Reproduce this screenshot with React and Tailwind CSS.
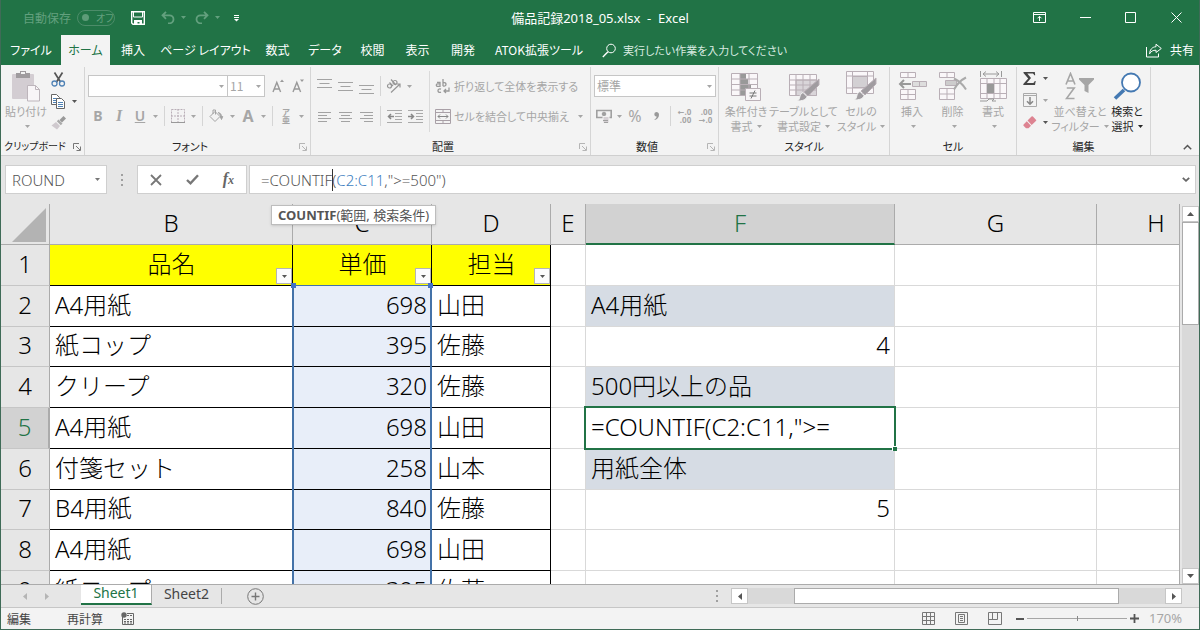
import React, { useState } from "react";
import { clsx } from "clsx";

const UI_FONT =
  "font-['Noto_Sans_CJK_JP','Noto_Sans',sans-serif] [font-feature-settings:'palt']";
const CELL_FONT =
  "font-['Noto_Sans','Noto_Sans_CJK_JP',sans-serif] font-light [font-feature-settings:normal]";

const tabs = [
  { label: "ファイル", width: "w-[60px]" },
  { label: "ホーム", width: "w-[49px]", active: true },
  { label: "挿入", width: "w-[46px]" },
  { label: "ページ レイアウト", width: "w-[99px]" },
  { label: "数式", width: "w-[45px]" },
  { label: "データ", width: "w-[50px]" },
  { label: "校閲", width: "w-[45px]" },
  { label: "表示", width: "w-[45px]" },
  { label: "開発", width: "w-[46px]" },
  { label: "ATOK拡張ツール", width: "w-[106px]" },
];

const columns = [
  { id: "B", width: "w-[243px]" },
  { id: "C", width: "w-[139px]" },
  { id: "D", width: "w-[119px]" },
  { id: "E", width: "w-[35px]" },
  { id: "F", width: "w-[309px]" },
  { id: "G", width: "w-[202px]" },
  { id: "H", width: "w-[119px]" },
];

const rows = [
  { B: "品名", C: "単価", D: "担当", header: true },
  { B: "A4用紙", C: "698", D: "山田", F: "A4用紙", shaded: true },
  { B: "紙コップ", C: "395", D: "佐藤", F: "4", short: true },
  { B: "クリープ", C: "320", D: "佐藤", F: "500円以上の品", shaded: true },
  { B: "A4用紙", C: "698", D: "山田", F: '=COUNTIF(C2:C11,">=', active: true },
  { B: "付箋セット", C: "258", D: "山本", F: "用紙全体", shaded: true },
  { B: "B4用紙", C: "840", D: "佐藤", F: "5", short: true },
  { B: "A4用紙", C: "698", D: "山田" },
  { B: "紙コップ", C: "395", D: "佐藤" },
];

const App = () => {
  return (
    <div
      className={`flex h-screen flex-col overflow-hidden border-x border-b border-[#3f6b57] bg-[#e6e6e6] text-xs text-[#262626] ${UI_FONT}`}
    >
      <TitleBar />
      <TabBar />
      <Ribbon />
      <FormulaBar />
      <Sheet />
      <SheetTabs />
      <StatusBar />
    </div>
  );
};

const TitleBar = () => (
  <header className="grid h-[35px] shrink-0 grid-cols-[1fr_auto_1fr] items-center bg-[#217346] text-white">
    <div className="flex items-center pl-[22px] text-[#63a07e]">
      <span id="autosave">自動保存</span>
      <button
        role="switch"
        aria-checked="false"
        aria-labelledby="autosave"
        className="ml-[6px] flex h-4 w-[38px] items-center gap-[7px] rounded-full border border-[#4c8c69] pl-1 text-[10px] leading-none"
      >
        <span className="size-[7px] rounded-full bg-[#5d9b78]" />
        オフ
      </button>
      <button aria-label="上書き保存" className="ml-4">
        <svg width="14" height="14" viewBox="0 0 14 14" fill="none">
          <path d="M.7.7h12.6v12.6H2L.7 12z" stroke="#fff" strokeWidth="1.4" />
          <path d="M2.5 1v5h9V1" stroke="#fff" strokeWidth="1" />
          <path d="M3 13V9h8v4H8.500v-2h-2v2z" fill="#fff" />
        </svg>
      </button>
      <button aria-label="元に戻す" className="ml-4 flex items-center gap-[6px]">
        <UndoIcon />
        <Arrow />
      </button>
      <button aria-label="やり直し" className="ml-[9px] flex items-center gap-[6px]">
        <UndoIcon className="-scale-x-100" />
        <Arrow />
      </button>
      <button aria-label="クイック アクセスのカスタマイズ" className="ml-[14px] text-white">
        <svg width="5" height="8" viewBox="0 0 5 8">
          <path d="M0 1.500h5M0 3.500h5" stroke="currentColor" />
          <path d="M0 5h5L2.500 7.500z" fill="currentColor" />
        </svg>
      </button>
    </div>
    <h1 className="font-['Noto_Sans','Noto_Sans_CJK_JP',sans-serif] text-[13px] leading-4 whitespace-pre">
      備品記録2018_05.xlsx  -  Excel
    </h1>
    <div className="flex items-center justify-end pr-[17px]">
      <button aria-label="リボンの表示オプション">
        <svg width="13" height="11" viewBox="0 0 13 11" fill="none" stroke="#fff">
          <path d="M.5.500h12v10H.5zM.5 2.500h12M6.500 9V4.500M4.500 6.300l2-2 2 2" />
        </svg>
      </button>
      <button aria-label="最小化" className="ml-[34px]">
        <svg width="11" height="11" viewBox="0 0 11 11" stroke="#fff">
          <path d="M0 5.500h11" />
        </svg>
      </button>
      <button aria-label="最大化" className="ml-[34px]">
        <svg width="11" height="11" viewBox="0 0 11 11" fill="none" stroke="#fff">
          <path d="M.5.500h10v10H.5z" />
        </svg>
      </button>
      <button aria-label="閉じる" className="ml-[35px]">
        <svg width="11" height="11" viewBox="0 0 11 11" stroke="#fff">
          <path d="M.5.500l10 10M10.500.5l-10 10" />
        </svg>
      </button>
    </div>
  </header>
);

const TabBar = () => (
  <nav className="flex h-[30px] shrink-0 items-stretch bg-[#217346] text-white">
    {tabs.map((tab) => (
      <button
        key={tab.label}
        className={clsx(
          "whitespace-nowrap text-center",
          tab.width,
          tab.active && "bg-[#f3f3f3] text-[#217346]"
        )}
      >
        {tab.label}
      </button>
    ))}
    <label className="ml-[10px] flex flex-1 items-center gap-[7px]">
      <svg width="14" height="15" viewBox="0 0 14 15" fill="none" stroke="#fff">
        <circle cx="9" cy="5.500" r="4.300" />
        <path d="M6 8.700.8 14" strokeWidth="1.400" />
      </svg>
      <input
        type="text"
        aria-label="操作アシスト"
        placeholder="実行したい作業を入力してください"
        className="w-60 bg-transparent text-[11px] outline-none placeholder:text-[#d9ebe1]"
      />
    </label>
    <button className="flex items-center gap-2 pr-[5px]">
      <svg width="16" height="15" viewBox="0 0 16 15" fill="none" stroke="#fff">
        <path d="M.5 4v10h12v-3.500" />
        <path d="M10 1.200 15.300 5.500 10 9.500V7.200C7 7.200 5 8.200 3.600 10.800 3.800 6.800 6 4 10 3.700z" />
      </svg>
      共有
    </button>
  </nav>
);

const Ribbon = () => (
  <section className="flex h-[91px] shrink-0 border-b border-[#cfcfcf] bg-[#f3f3f3] text-[#a6a6a6]">
    <Group label="クリップボード" width="w-[84px]" labelSize="text-[10px]" launcher="dark">
      <BigButton width="w-[50px]" label={["貼り付け"]} icon={<PasteIcon />} arrowBelow />
      <div className="flex flex-col pt-px">
        <button aria-label="切り取り" className="h-[22px]">
          <CutIcon />
        </button>
        <button aria-label="コピー" className="flex h-[22px] items-center gap-[6px]">
          <CopyIcon />
          <Arrow className="text-[#555]" />
        </button>
        <button aria-label="書式のコピー/貼り付け" className="h-[22px]">
          <PainterIcon />
        </button>
      </div>
    </Group>

    <Group label="フォント" width="w-[226px]" launcher="light">
      <div className="flex flex-col gap-2 pt-2 pl-[3px]">
        <div className="flex h-[22px] items-center">
          <DropBox label="フォント名" width="w-[140px]" value="" />
          <DropBox label="フォント サイズ" width="-ml-px w-[38px]" value="11" />
          <Tool label="フォント サイズの拡大" width="ml-[3px] w-[20px]">
            <FontSizeIcon up />
          </Tool>
          <Tool label="フォント サイズの縮小" width="w-[20px]">
            <FontSizeIcon />
          </Tool>
        </div>
        <div className="flex h-[22px] items-center">
          <Tool label="太字" width="w-[20px] font-['Noto_Sans'] text-sm font-bold">
            B
          </Tool>
          <Tool label="斜体" width="w-[22px] font-['Liberation_Serif'] text-base font-bold italic">
            I
          </Tool>
          <Tool label="下線" width="w-[20px] font-['Noto_Sans'] text-sm font-semibold underline">
            U
          </Tool>
          <ArrowButton label="下線の種類" />
          <Sep />
          <Tool label="罫線" width="w-[20px]">
            <svg width="14" height="14" viewBox="0 0 14 14" fill="none" stroke="#b9aeb7">
              <path d="M.5.500h13v13H.5zM7 0v14M0 7h14" strokeDasharray="2 1" />
              <path d="M0 13.500h14" stroke="#999" />
            </svg>
          </Tool>
          <ArrowButton label="罫線の種類" />
          <Sep />
          <Tool label="塗りつぶしの色" width="w-[21px]">
            <svg width="15" height="14" viewBox="0 0 15 14" fill="none" stroke="#a3a3a3">
              <path d="M6 2.500 11 7.500 6 12.500 1 7.500zM4 5V1h2.500v4.500" />
              <path d="M9 3.500c3 .5 3.500 2.500 3.500 5M11.200 7.500h2.500l-1.200 3z" fill="#a3a3a3" />
            </svg>
          </Tool>
          <ArrowButton label="塗りつぶしの色の選択" />
          <Tool label="フォントの色" width="w-[20px] font-['Noto_Sans'] text-base font-bold">
            A
          </Tool>
          <ArrowButton label="フォントの色の選択" />
          <Sep />
          <Tool label="ふりがなの表示" width="w-[20px]">
            <span className="flex flex-col items-center text-[8px] leading-[8px] font-bold">
              <span>ア</span>
              <span>亜</span>
            </span>
          </Tool>
          <ArrowButton label="ふりがなの設定" />
        </div>
      </div>
    </Group>

    <Group label="配置" width="w-[280px]" launcher="light">
      <div className="flex w-[118px] flex-col gap-2 pt-2 pl-[3px]">
        <div className="flex h-[22px] items-center">
          <Tool label="上揃え" width="w-[21px]">
            <LinesIcon d="M0 .5h15M2.500 4.500h10M0 8.500h15" />
          </Tool>
          <Tool label="上下中央揃え" width="w-[21px]">
            <LinesIcon d="M0 3.500h15M2.500 7.500h10M0 11.500h15" />
          </Tool>
          <Tool label="下揃え" width="w-[21px]">
            <LinesIcon d="M0 6.500h15M2.500 10.500h10M0 14.500h15" />
          </Tool>
          <Sep />
          <Tool label="方向" width="w-[20px]">
            <svg width="16" height="16" viewBox="0 0 16 16" fill="none" stroke="#969696" strokeWidth="1.200">
              <circle cx="3.500" cy="8" r="2" />
              <path d="M3.500 4.500 7 8M5 1.500 10 7" />
              <circle cx="9" cy="4.500" r="2" />
              <path d="M5 14.500 14 6M10.500 6H14v3.500" />
            </svg>
          </Tool>
          <ArrowButton label="方向の選択" />
        </div>
        <div className="flex h-[22px] items-center">
          <Tool label="左揃え" width="w-[21px]">
            <LinesIcon d="M1 3.500h13M1 6.500h9M1 9.500h13M1 12.500h9" />
          </Tool>
          <Tool label="中央揃え" width="w-[21px]">
            <LinesIcon d="M1 3.500h13M3 6.500h9M1 9.500h13M3 12.500h9" />
          </Tool>
          <Tool label="右揃え" width="w-[21px]">
            <LinesIcon d="M1 3.500h13M5 6.500h9M1 9.500h13M5 12.500h9" />
          </Tool>
          <Sep />
          <Tool label="インデントを減らす" width="w-[21px]">
            <IndentIcon arrow="M7 7.500H1.500M4 5 1.500 7.500 4 10" />
          </Tool>
          <Tool label="インデントを増やす" width="w-[21px]">
            <IndentIcon arrow="M0 7.500h5.500M3 5l2.500 2.500L3 10" />
          </Tool>
        </div>
      </div>
      <div className="my-1 flex flex-1 flex-col gap-2 border-l border-[#dadada] pt-1 pl-[5px] text-[11px]">
        <button className="flex h-[22px] items-center gap-[3px] whitespace-nowrap">
          <svg width="16" height="15" viewBox="0 0 16 15" fill="none" stroke="#999" strokeWidth="1.300">
            <path d="M2 3.300h3v4H2.500a1.200 1.200 0 0 1 0-2.400H5M8 0v7M8 3.800c4-1.500 4 4.500 0 3" />
            <path d="M6 10.200c-4-1.500-4 4.500 0 3M14 8.500v3.500H9M11 10l-2 2 2 2" />
          </svg>
          折り返して全体を表示する
        </button>
        <div className="flex h-[22px] items-center">
          <button className="flex flex-1 items-center gap-[3px] whitespace-nowrap">
            <svg width="16" height="15" viewBox="0 0 16 15" fill="none" stroke="#a9a0a7">
              <path d="M.5.500h15v14H.5zM.5 3.500h15M.5 11.500h15M8 .5v3M8 11.500v3" />
              <path d="M3 7.500h10M5 5.500l-2 2 2 2M11 5.500l2 2-2 2" stroke="#888" />
            </svg>
            セルを結合して中央揃え
          </button>
          <ArrowButton label="結合の種類" />
          <span className="w-1" />
        </div>
      </div>
    </Group>

    <Group label="数値" width="w-[128px]" launcher="light">
      <div className="flex flex-col gap-2 pt-2 pl-[3px]">
        <div className="flex h-[22px] items-center">
          <DropBox label="表示形式" width="w-[122px]" value="標準" />
        </div>
        <div className="flex h-[22px] items-center">
          <Tool label="通貨表示形式" width="w-[20px]">
            <svg width="16" height="15" viewBox="0 0 16 15" fill="none" stroke="#a0a0a0">
              <path d="M.8 1.500h14.400v7H.8z" strokeWidth="1.600" />
              <circle cx="8" cy="5" r="1.800" fill="#a0a0a0" />
              <path d="M7 7.500h6v6.500H7z" fill="#d5d0d4" stroke="#f3f3f3" />
              <path d="M7 11.500h5M8 13.500h4" />
            </svg>
          </Tool>
          <ArrowButton label="通貨の選択" />
          <Tool label="パーセント スタイル" width="w-[20px] font-['Noto_Sans'] text-base">
            %
          </Tool>
          <Tool label="桁区切りスタイル" width="w-[22px]">
            <svg width="5" height="8" viewBox="0 0 5 8" fill="#999">
              <path d="M2.300 0a2.200 2.200 0 1 0 .4 4.400C2.500 6 1.500 6.800.5 7.200L.8 8C3.500 7.200 5 5 5 2.700 5 1 3.900 0 2.300 0z" />
            </svg>
          </Tool>
          <Sep />
          <Tool label="小数点以下の表示桁数を増やす" width="w-[21px]">
            <DecimalIcon top="←.0" bottom=".00" />
          </Tool>
          <Tool label="小数点以下の表示桁数を減らす" width="w-[21px]">
            <DecimalIcon top=".00" bottom="→.0" />
          </Tool>
        </div>
      </div>
    </Group>

    <Group label="スタイル" width="w-[171px]">
      <div className="flex pl-[3px]">
        <BigButton width="w-[48px]" label={["条件付き", "書式"]} icon={<ConditionalIcon />} />
        <BigButton width="w-[67px]" label={["テーブルとして", "書式設定"]} icon={<TableStyleIcon />} />
        <BigButton width="w-[48px]" label={["セルの", "スタイル"]} icon={<CellStyleIcon />} />
      </div>
    </Group>

    <Group label="セル" width="w-[127px]">
      <div className="flex pl-[2px]">
        <BigButton width="w-[40px]" label={["挿入"]} icon={<InsertIcon />} arrowBelow />
        <BigButton width="w-[41px]" label={["削除"]} icon={<DeleteIcon />} arrowBelow />
        <BigButton width="w-[40px]" label={["書式"]} icon={<FormatIcon />} arrowBelow />
      </div>
    </Group>

    <Group label="編集" width="w-[134px]">
      <div className="flex w-[36px] flex-col pl-[6px]">
        <button aria-label="オート SUM" className="flex h-[22px] items-center gap-[6px] text-[#444]">
          <svg width="14" height="13" viewBox="0 0 14 13" fill="#444">
            <path d="M.5 0h11.300l.4 3.200h-1C10.800 2 10.300 1.500 9 1.500H4.300L8 6 3.800 11h5.500c1.500 0 2-.6 2.400-2h1L12 13H.3v-1L5.200 6.500.5 1z" />
          </svg>
          <Arrow className="text-[#555]" />
        </button>
        <button aria-label="フィル" className="flex h-[22px] items-center gap-[6px]">
          <svg width="14" height="14" viewBox="0 0 14 14" fill="none" stroke="#aaa">
            <path d="M.5.500h13v13H.5zM.5 2.500h13" />
            <path d="M7 4v7M4 8.200l3 3 3-3" stroke="#888" strokeWidth="1.500" />
          </svg>
          <Arrow />
        </button>
        <button aria-label="クリア" className="flex h-[22px] items-center gap-[6px]">
          <svg width="14" height="13" viewBox="0 0 14 13" fill="#dd8391">
            <path d="M8.500.5a1 1 0 0 1 1.400 0l3 3.200a1 1 0 0 1 0 1.400L8.700 9 4.500 4.500z" />
            <path d="M3.800 5.200 8 9.700l-2.500 2.600H3L.8 10a1.200 1.200 0 0 1 0-1.700z" />
          </svg>
          <Arrow className="text-[#555]" />
        </button>
      </div>
      <BigButton
        width="w-[54px]"
        label={["並べ替えと", "フィルター"]}
        icon={
          <svg width="30" height="28" viewBox="0 0 30 28" fill="none" stroke="#a6a6a6" strokeWidth="1.600">
            <path d="M1 12.500 5.500 1.500 10 12.500M2.700 9h5.600M1.800 16h7.400L1.500 26.500h8" />
            <path d="M14 6h15v1.500L23.500 13v8L19.500 19v-6L14 7.500z" fill="#a6a6a6" stroke="none" />
          </svg>
        }
      />
      <BigButton
        width="w-[40px] text-[#262626]"
        label={["検索と", "選択"]}
        icon={
          <svg width="28" height="28" viewBox="0 0 28 28" fill="none" stroke="#4479b2">
            <circle cx="18" cy="10.500" r="9" fill="#fff" strokeWidth="1.800" />
            <path d="M11 18 2 26.500" strokeWidth="3.600" />
          </svg>
        }
      />
    </Group>

    <div className="flex flex-1 items-end justify-end pr-[7px] pb-[5px]">
      <button aria-label="リボンを折りたたむ">
        <svg width="9" height="6" viewBox="0 0 9 6" fill="none" stroke="#555" strokeWidth="1.500">
          <path d="M.8 5.200 4.500 1.500l3.700 3.700" />
        </svg>
      </button>
    </div>
  </section>
);

const Group = ({ label, width, launcher, labelSize = "text-[11px]", children }) => (
  <div className={`flex shrink-0 flex-col pt-[2px] ${width}`}>
    <div className="flex flex-1 flex-col border-r border-[#d5d5d5]">
      <div className="flex h-[69px]">{children}</div>
      <div className="flex flex-1 items-center text-[#262626]">
        <span className={`flex-1 text-center leading-4 whitespace-nowrap ${labelSize}`}>
          {label}
        </span>
        {launcher && (
          <button aria-label={`${label}の設定`} className="flex w-[15px] justify-center pt-[2px]">
            <svg
              width="8"
              height="8"
              viewBox="0 0 8 8"
              fill="none"
              stroke={launcher === "dark" ? "#777" : "#b5b5b5"}
            >
              <path d="M.5 6V.5H6M3 3l4 4M7.500 3.500v4h-4" />
            </svg>
          </button>
        )}
      </div>
    </div>
  </div>
);

const BigButton = ({ width, label, icon, arrowBelow }) => (
  <button className={`flex flex-col items-center pt-[3px] text-[11px] leading-[15px] ${width}`}>
    <span className="flex h-8 items-center justify-center">{icon}</span>
    <span className="mt-[2px] whitespace-nowrap">{label[0]}</span>
    <span className="flex h-[15px] items-center gap-1 whitespace-nowrap">
      {label[1]}
      <Arrow className={arrowBelow ? "ml-[3px]" : ""} />
    </span>
  </button>
);

const Tool = ({ label, width, children }) => (
  <button
    aria-label={label}
    className={`flex h-[22px] items-center justify-center leading-none ${width}`}
  >
    {children}
  </button>
);

const ArrowButton = ({ label }) => (
  <button aria-label={label} className="flex h-[22px] w-[11px] items-center justify-center">
    <Arrow />
  </button>
);

const Arrow = ({ className = "" }) => (
  <svg width="5" height="3" viewBox="0 0 5 3" className={`shrink-0 ${className}`}>
    <path d="M0 0h5L2.500 3z" fill="currentColor" />
  </svg>
);

const Sep = () => <span className="mx-[3px] h-5 w-px bg-[#d5d5d5]" />;

const DropBox = ({ label, width, value }) => (
  <span className={`grid h-[22px] items-center border border-[#c6c6c6] bg-white ${width}`}>
    <select
      aria-label={label}
      defaultValue={value}
      className="col-start-1 row-start-1 h-5 appearance-none bg-transparent pl-[2px] text-xs outline-none"
    >
      <option value={value}>{value}</option>
    </select>
    <Arrow className="pointer-events-none col-start-1 row-start-1 mr-[3px] justify-self-end" />
  </span>
);

const FormulaBar = () => {
  const [formula, setFormula] = useState('=COUNTIF(C2:C11,">=500")');
  const [, before, range, after] = formula.match(/^([^(]*\(?)([A-Z]\d+:[A-Z]\d+)?(.*)$/);

  return (
    <section className={`flex h-[48px] shrink-0 items-start pt-[9px] pr-[3px] pl-1 text-[#555] ${CELL_FONT}`}>
      <label className="grid h-[29px] w-[102px] items-center border border-[#cfcfcf] bg-white">
        <input
          aria-label="名前ボックス"
          defaultValue="ROUND"
          className="col-start-1 row-start-1 w-full bg-transparent pl-[6px] text-[15px] outline-none"
        />
        <Arrow className="col-start-1 row-start-1 mr-[6px] justify-self-end text-[#777]" />
      </label>
      <span className="flex h-[29px] w-[30px] items-center justify-center">
        <Dots />
      </span>
      <div className="flex h-[29px] w-[110px] items-center justify-around border border-[#cfcfcf] bg-white">
        <button aria-label="キャンセル">
          <svg width="12" height="12" viewBox="0 0 12 12" stroke="#777" strokeWidth="1.800">
            <path d="M1 1l10 10M11 1 1 11" />
          </svg>
        </button>
        <button aria-label="入力">
          <svg width="13" height="11" viewBox="0 0 13 11" fill="none" stroke="#777" strokeWidth="2.400">
            <path d="M1 6l3.500 3.300L12 1.300" />
          </svg>
        </button>
        <button
          aria-label="関数の挿入"
          className="font-['Liberation_Serif'] text-base leading-none font-bold text-[#666] italic"
        >
          f<span className="text-xs">x</span>
        </button>
      </div>
      <div className="relative ml-[2px] grid h-[29px] flex-1 grid-cols-[1fr_auto] items-center border border-[#cfcfcf] bg-white text-[15px]">
        <span aria-hidden="true" className="col-start-1 row-start-1 flex items-center pl-[11px] whitespace-pre">
          {before.replace("(", "")}
          <span className="-mr-px h-[22px] w-px bg-[#333]" />
          {before.includes("(") && "("}
          <span className="text-[#3f7fc1]">{range}</span>
          {after}
        </span>
        <input
          aria-label="数式バー"
          value={formula}
          onChange={(e) => setFormula(e.target.value)}
          className="col-start-1 row-start-1 w-full bg-transparent pl-[11px] text-transparent outline-none"
        />
        <button aria-label="数式バーの展開" className="pr-[5px]">
          <svg width="8" height="5" viewBox="0 0 8 5" fill="none" stroke="#666" strokeWidth="1.800">
            <path d="M.8.8 4 3.800 7.200.8" />
          </svg>
        </button>
        <div
          role="tooltip"
          className="absolute top-[39px] left-[21px] z-20 border border-[#bdbdbd] bg-white px-[6px] text-[13px] leading-[18px] font-normal whitespace-nowrap text-[#555] shadow-sm"
        >
          <b className="font-bold">COUNTIF</b>(範囲, 検索条件)
        </div>
      </div>
    </section>
  );
};

const Sheet = () => (
  <main className="flex min-h-0 flex-1">
    <div className={`flex-1 overflow-hidden border-r border-[#ababab] text-2xl text-black ${CELL_FONT}`}>
      <table className="w-[1215px] table-fixed border-separate border-spacing-0 leading-none">
        <thead>
          <tr className="h-[41px] bg-[#e6e6e6]">
            <td className="w-[49px] border-r border-b border-[#ababab] p-0">
              <svg width="35" height="35" viewBox="0 0 35 35" className="ml-[11px]">
                <path d="M34 1v34H0z" fill="#b3b3b3" />
              </svg>
            </td>
            {columns.map((col) => (
              <th
                key={col.id}
                scope="col"
                className={clsx(
                  "border-r border-[#ababab] p-0 pb-[2px] font-light",
                  col.width,
                  col.id === "F"
                    ? "border-b-2 border-b-[#217346] bg-[#d2d2d2] text-[#217346]"
                    : "border-b"
                )}
              >
                {col.id}
              </th>
            ))}
          </tr>
        </thead>
        <tbody className="bg-white">
          {rows.map((row, i) => (
            <tr key={i} className={row.short ? "h-[40px]" : "h-[41px]"}>
              <th
                scope="row"
                className={clsx(
                  "border-r border-b border-r-[#ababab] border-b-[#c6c6c6] p-0 pb-[3px] font-light",
                  row.active
                    ? "border-r-2 border-r-[#217346] bg-[#d2d2d2] text-[#217346]"
                    : "bg-[#e6e6e6]"
                )}
              >
                {i + 1}
              </th>
              {columns.map((col) => (
                <Cell key={col.id} col={col.id} row={row} index={i} />
              ))}
            </tr>
          ))}
        </tbody>
      </table>
    </div>
    <div className="ml-[2px] flex w-[17px] flex-col pt-[2px]">
      <ScrollButton label="上へ" d="M0 4h7L3.500 0z" />
      <div className="flex-1 bg-[#d9d9d9]">
        <div className="h-[103px] border border-[#ababab] bg-white" />
      </div>
      <ScrollButton label="下へ" d="M0 0h7L3.500 4z" />
    </div>
  </main>
);

const Cell = ({ col, row, index }) => {
  const inList = col === "B" || col === "C" || col === "D";
  const numeric = col === "C" || /^\d$/.test(row[col] ?? "");

  return (
    <td
      className={clsx(
        "relative border-r border-b pt-0 pr-1 pb-[3px] pl-[5px] whitespace-nowrap",
        inList ? "border-black" : "border-[#d9d9d9]",
        inList && row.header && "bg-[#ffff00] text-center",
        !row.header && numeric && "text-right",
        !row.header && col === "C" && "bg-[#e8eef9]",
        col === "F" && row.shaded && "bg-[#d6dce4]"
      )}
    >
      {row[col]}
      {inList && row.header && (
        <button
          aria-label={`${row[col]}のフィルター`}
          className="absolute right-0 bottom-px z-10 flex size-4 items-center justify-center border border-[#b5b5b5] bg-[#fcfcfc] text-[#555]"
        >
          <Arrow />
        </button>
      )}
      {/* C2:C11 range marker */}
      {col === "C" && index === 1 && (
        <div className="pointer-events-none absolute -top-px -right-px -left-px z-10 h-[409px] border-x-2 border-t border-[#4472a8]">
          <span className="absolute -top-[3px] -left-[3px] size-[5px] bg-[#4472c4]" />
          <span className="absolute -top-[3px] -right-[3px] size-[5px] bg-[#4472c4]" />
        </div>
      )}
      {/* active cell marker */}
      {col === "F" && row.active && (
        <div className="pointer-events-none absolute -top-[2px] -right-[2px] -bottom-[2px] -left-[2px] z-10 border-2 border-[#217346]">
          <span className="absolute -right-[3px] -bottom-[3px] size-[5px] border-t border-l border-white bg-[#217346]" />
        </div>
      )}
    </td>
  );
};

const ScrollButton = ({ label, d, vertical = true }) => (
  <button
    aria-label={label}
    className="flex h-4 w-[17px] shrink-0 items-center justify-center border border-[#c6c6c6] bg-white"
  >
    <svg
      width={vertical ? 7 : 4}
      height={vertical ? 4 : 7}
      viewBox={vertical ? "0 0 7 4" : "0 0 4 7"}
      fill="#555"
    >
      <path d={d} />
    </svg>
  </button>
);

const SheetTabs = () => (
  <nav className="flex h-[23px] shrink-0 border-t border-[#ababab] font-['Noto_Sans',sans-serif] text-sm">
    <div className="flex w-20 items-center gap-[18px] pl-[22px] text-[#b5b5b5]">
      <button aria-label="前のシート">
        <svg width="4" height="7" viewBox="0 0 4 7" fill="currentColor">
          <path d="M4 0v7L0 3.500z" />
        </svg>
      </button>
      <button aria-label="次のシート">
        <svg width="4" height="7" viewBox="0 0 4 7" fill="currentColor">
          <path d="M0 0v7l4-3.500z" />
        </svg>
      </button>
    </div>
    <button className="h-5 w-[71px] border-r border-b-2 border-r-[#ababab] border-b-[#217346] bg-white pb-[2px] leading-4 text-[#217346]">
      Sheet1
    </button>
    <button className="h-5 w-[69px] pb-[3px] leading-4 text-[#444]">Sheet2</button>
    <span className="mt-[3px] h-4 w-px bg-[#ababab]" />
    <button aria-label="新しいシート" className="ml-[25px]">
      <svg width="17" height="17" viewBox="0 0 17 17" fill="none" stroke="#777">
        <circle cx="8.500" cy="8.500" r="7.800" />
        <path d="M8.500 4.500v8M4.500 8.500h8" strokeWidth="1.400" />
      </svg>
    </button>
    <div className="ml-auto flex w-[483px] items-center pr-[17px]">
      <Dots />
      <span className="w-3" />
      <ScrollButton label="左へ" d="M4 0v7L0 3.500z" vertical={false} />
      <div className="flex h-4 flex-1 bg-[#d9d9d9]">
        <div className="ml-[46px] w-[325px] border border-[#ababab] bg-white" />
      </div>
      <ScrollButton label="右へ" d="M0 0v7l4-3.500z" vertical={false} />
    </div>
  </nav>
);

const StatusBar = () => (
  <footer className="flex h-[22px] shrink-0 items-center border-t border-[#c6c6c6] bg-[#f3f3f3] pr-[17px] pl-[6px] text-[#444]">
    <span>編集</span>
    <span className="ml-9">再計算</span>
    <button aria-label="マクロの記録" className="ml-[18px]">
      <svg width="13" height="13" viewBox="0 0 13 13" fill="none" stroke="#666">
        <path d="M1.500 5v7.500h11v-11H6" />
        <path d="M6 3.500h6.500M3 7.500h8M3 9.500h8M3 11h8" strokeDasharray="2 1" />
        <circle cx="3" cy="3" r="2.700" fill="#666" stroke="none" />
      </svg>
    </button>
    <div className="ml-auto flex items-center gap-5">
      <button aria-label="標準">
        <svg width="13" height="13" viewBox="0 0 13 13" fill="none" stroke="#777">
          <path d="M.5.500h12v12H.5zM4.500 0v13M8.500 0v13M0 4.500h13M0 8.500h13" />
        </svg>
      </button>
      <button aria-label="ページ レイアウト表示">
        <svg width="13" height="13" viewBox="0 0 13 13" fill="none" stroke="#777">
          <path d="M.5.500h12v12H.5zM3.500 2.500h6v8h-6zM5 4.500h3M5 6.500h3M5 8.500h3" />
        </svg>
      </button>
      <button aria-label="改ページ プレビュー">
        <svg width="14" height="13" viewBox="0 0 14 13" fill="none" stroke="#777">
          <path d="M.5.500h13v12H.5zM4.500.5v7M9.500.5v7M.5 7.500h9" />
        </svg>
      </button>
    </div>
    <button aria-label="縮小" className="ml-[14px] h-[2px] w-2 bg-[#555]" />
    <input
      type="range"
      aria-label="ズーム"
      min="0"
      max="100"
      defaultValue="50"
      className="mx-[3px] h-px w-[100px] appearance-none bg-[#a6a6a6] [&::-webkit-slider-thumb]:h-[5px] [&::-webkit-slider-thumb]:w-px [&::-webkit-slider-thumb]:appearance-none [&::-webkit-slider-thumb]:bg-[#888]"
    />
    <button aria-label="拡大">
      <svg width="9" height="9" viewBox="0 0 9 9" stroke="#555" strokeWidth="1.800">
        <path d="M4.500 0v9M0 4.500h9" />
      </svg>
    </button>
    <span className="ml-[10px] w-[33px] text-right font-['Noto_Sans',sans-serif] text-[13px] text-[#a6a6a6]">
      170%
    </span>
  </footer>
);

const Dots = () => (
  <svg width="3" height="12" viewBox="0 0 3 12" fill="#a0a0a0">
    <path d="M0 0h2v2H0zM0 5h2v2H0zM0 10h2v2H0z" />
  </svg>
);

const DecimalIcon = ({ top, bottom }) => (
  <span className="flex flex-col items-end font-['Noto_Sans','DejaVu_Sans',sans-serif] text-[8px] leading-[8px] font-bold">
    <span>{top}</span>
    <span>{bottom}</span>
  </span>
);

const UndoIcon = ({ className = "" }) => (
  <svg
    width="14"
    height="13"
    viewBox="0 0 14 13"
    fill="none"
    stroke="currentColor"
    strokeWidth="1.800"
    className={className}
  >
    <path d="M5 .8 1.500 4.300 5 7.800M2 4.300h6.500a4 4 0 0 1 0 8H7" />
  </svg>
);

const LinesIcon = ({ d }) => (
  <svg width="15" height="15" viewBox="0 0 15 15" stroke="#a3a3a3">
    <path d={d} />
  </svg>
);

const IndentIcon = ({ arrow }) => (
  <svg width="15" height="15" viewBox="0 0 15 15" fill="none" stroke="#aaa">
    <path d="M0 1.500h15M8 4.500h7M8 7.500h7M8 10.500h7M0 13.500h15" />
    <path d={arrow} stroke="#888" strokeWidth="1.500" />
  </svg>
);

const FontSizeIcon = ({ up }) => (
  <svg width="13" height="14" viewBox="0 0 13 14" fill="none" stroke="#999" strokeWidth="1.400">
    <path d="M1 13 4.800 3.500 8.600 13M2.400 10h4.800" />
    <path d={up ? "M8 3h4L10 .5z" : "M8 .5h4L10 3z"} fill="#999" stroke="none" />
  </svg>
);

const PasteIcon = () => (
  <svg width="30" height="32" viewBox="0 0 30 32">
    <rect x="1" y="4" width="22" height="25" rx="1" fill="#d3cdd2" />
    <path d="M5 3h4V1h6v2h4v5H5z" fill="#9f9b9e" />
    <rect x="10" y="2" width="4" height="2" fill="#f3f3f3" />
    <path d="M16.500 15.500h8l4 4v11.500h-12z" fill="#f8f5f7" stroke="#bdb5bb" />
    <path d="M24.500 15.500v4h4" fill="none" stroke="#bdb5bb" />
  </svg>
);

const CutIcon = () => (
  <svg width="15" height="15" viewBox="0 0 15 15" fill="none">
    <path d="M3.500.5 9.500 10M11.500.5l-6 9.500" stroke="#555" strokeWidth="1.700" />
    <circle cx="3.500" cy="11.500" r="2.500" stroke="#4f82b5" strokeWidth="1.300" />
    <circle cx="11" cy="11.500" r="2.500" stroke="#4f82b5" strokeWidth="1.300" />
  </svg>
);

const CopyIcon = () => (
  <svg width="15" height="15" viewBox="0 0 15 15" fill="#fff" stroke="#666">
    <path d="M.5.500h5l3 3v7h-8z" />
    <path d="M2 4.500h4M2 6.500h4M2 8.500h4" stroke="#4f82b5" />
    <path d="M5.500 4.500h5l3 3v7h-8z" />
    <path d="M7 8.500h5M7 10.500h5M7 12.500h5" stroke="#4f82b5" />
  </svg>
);

const PainterIcon = () => (
  <svg width="15" height="14" viewBox="0 0 15 14">
    <path d="M12.500 0 15 2.500 11 6.500 8.500 4z" fill="#999" />
    <path d="M7.500 3.500l4 4L9.800 9.200l-4-4z" fill="#aaa" />
    <path d="M5 6l4 4-3 3.500L.5 9.500z" fill="#cfc9ce" />
  </svg>
);

const BrushPath = () => (
  <>
    <path d="M31 8v6L20 25l-4-4z" fill="#a09ca0" />
    <path d="M15 21.500l4 4C18 29 14 30 9.500 30c3-1.500 1.500-7 5.500-8.500z" fill="#a09ca0" stroke="#f3f3f3" />
  </>
);

const ConditionalIcon = () => (
  <svg width="30" height="30" viewBox="0 0 30 30" fill="none" stroke="#b9afb6">
    <path d="M.5 2.500h26v22H.5z" fill="#faf7f9" />
    <path d="M9 3h6v5h2v6h3v5h-5v5H9z" fill="#999" stroke="none" />
    <path d="M.5 8h26M.5 13.500h26M.5 19h26M9 2.500v22M18 2.500v22" />
    <path d="M14.500 17.500h15v12h-15z" fill="#f8f5f7" />
    <path d="M18.500 22h7M18.500 25h7M24 19.500l-4 8" stroke="#777" />
  </svg>
);

const TableStyleIcon = () => (
  <svg width="32" height="31" viewBox="0 0 32 31" fill="none" stroke="#b9afb6">
    <path d="M1.500 3.500h27v21h-27z" fill="#faf7f9" />
    <path d="M8 9h20.500v15.500H8z" fill="#d9d5d9" />
    <path d="M1.500 9h27M1.500 14h27M1.500 19h27M8 3.500v21M15 3.500v21M22 3.500v21" />
    <BrushPath />
  </svg>
);

const CellStyleIcon = () => (
  <svg width="32" height="32" viewBox="0 0 32 32" fill="none" stroke="#b9afb6">
    <path d="M1.500 1.500h27v22h-27z" fill="#faf7f9" />
    <path d="M1.500 6h27M1.500 18h27M7.500 1.500v22M22.500 1.500v22" />
    <path d="M7.500 6.500h15v11h-15z" fill="#d3d0d3" />
    <BrushPath />
  </svg>
);

const InsertIcon = () => (
  <svg width="29" height="30" viewBox="0 0 29 30" fill="none" stroke="#b9afb6">
    <path d="M2.500 1.500h15v5h-15zM10 1.500v5M2.500 18.500h15v10h-15zM10 18.500v10M2.500 23.500h15" fill="#faf7f9" />
    <path d="M14.500 10.500h14v5h-14zM21.500 10.500v5" fill="#ddd" />
    <path d="M13 13H2M6 9 2 13l4 4" stroke="#999" strokeWidth="2" />
  </svg>
);

const DeleteIcon = () => (
  <svg width="29" height="30" viewBox="0 0 29 30" fill="none" stroke="#b9afb6">
    <path d="M1.500 1.500h15v5h-15zM9 1.500v5M1.500 17.500h15v11h-15zM9 17.500v11M1.500 23h15" fill="#faf7f9" />
    <path d="M7.500 9.500h11v5h-11z" fill="#ccc" />
    <path d="M16 7.500c4 2 9 6 12 11M28 6.500C23 9 19 13 16 18.500" stroke="#aaa" strokeWidth="2" />
  </svg>
);

const FormatIcon = () => (
  <svg width="29" height="31" viewBox="0 0 29 31" fill="none" stroke="#b9afb6">
    <path d="M1.500 7.500h26v20h-26z" fill="#faf7f9" />
    <path d="M1.500 12.500h26M1.500 22.500h26M8 7.500v20M15 7.500v20M21 7.500v20" />
    <path d="M8 13h7v9H8z" fill="#999" stroke="none" />
    <path d="M1.500 0v6M22.500 0v6M4 3h16M7 .5 4 3l3 2.500M17 .5 20 3l-3 2.500M1 30h7l2-2h5l-2 2h4" stroke="#999" />
  </svg>
);

export default App;
